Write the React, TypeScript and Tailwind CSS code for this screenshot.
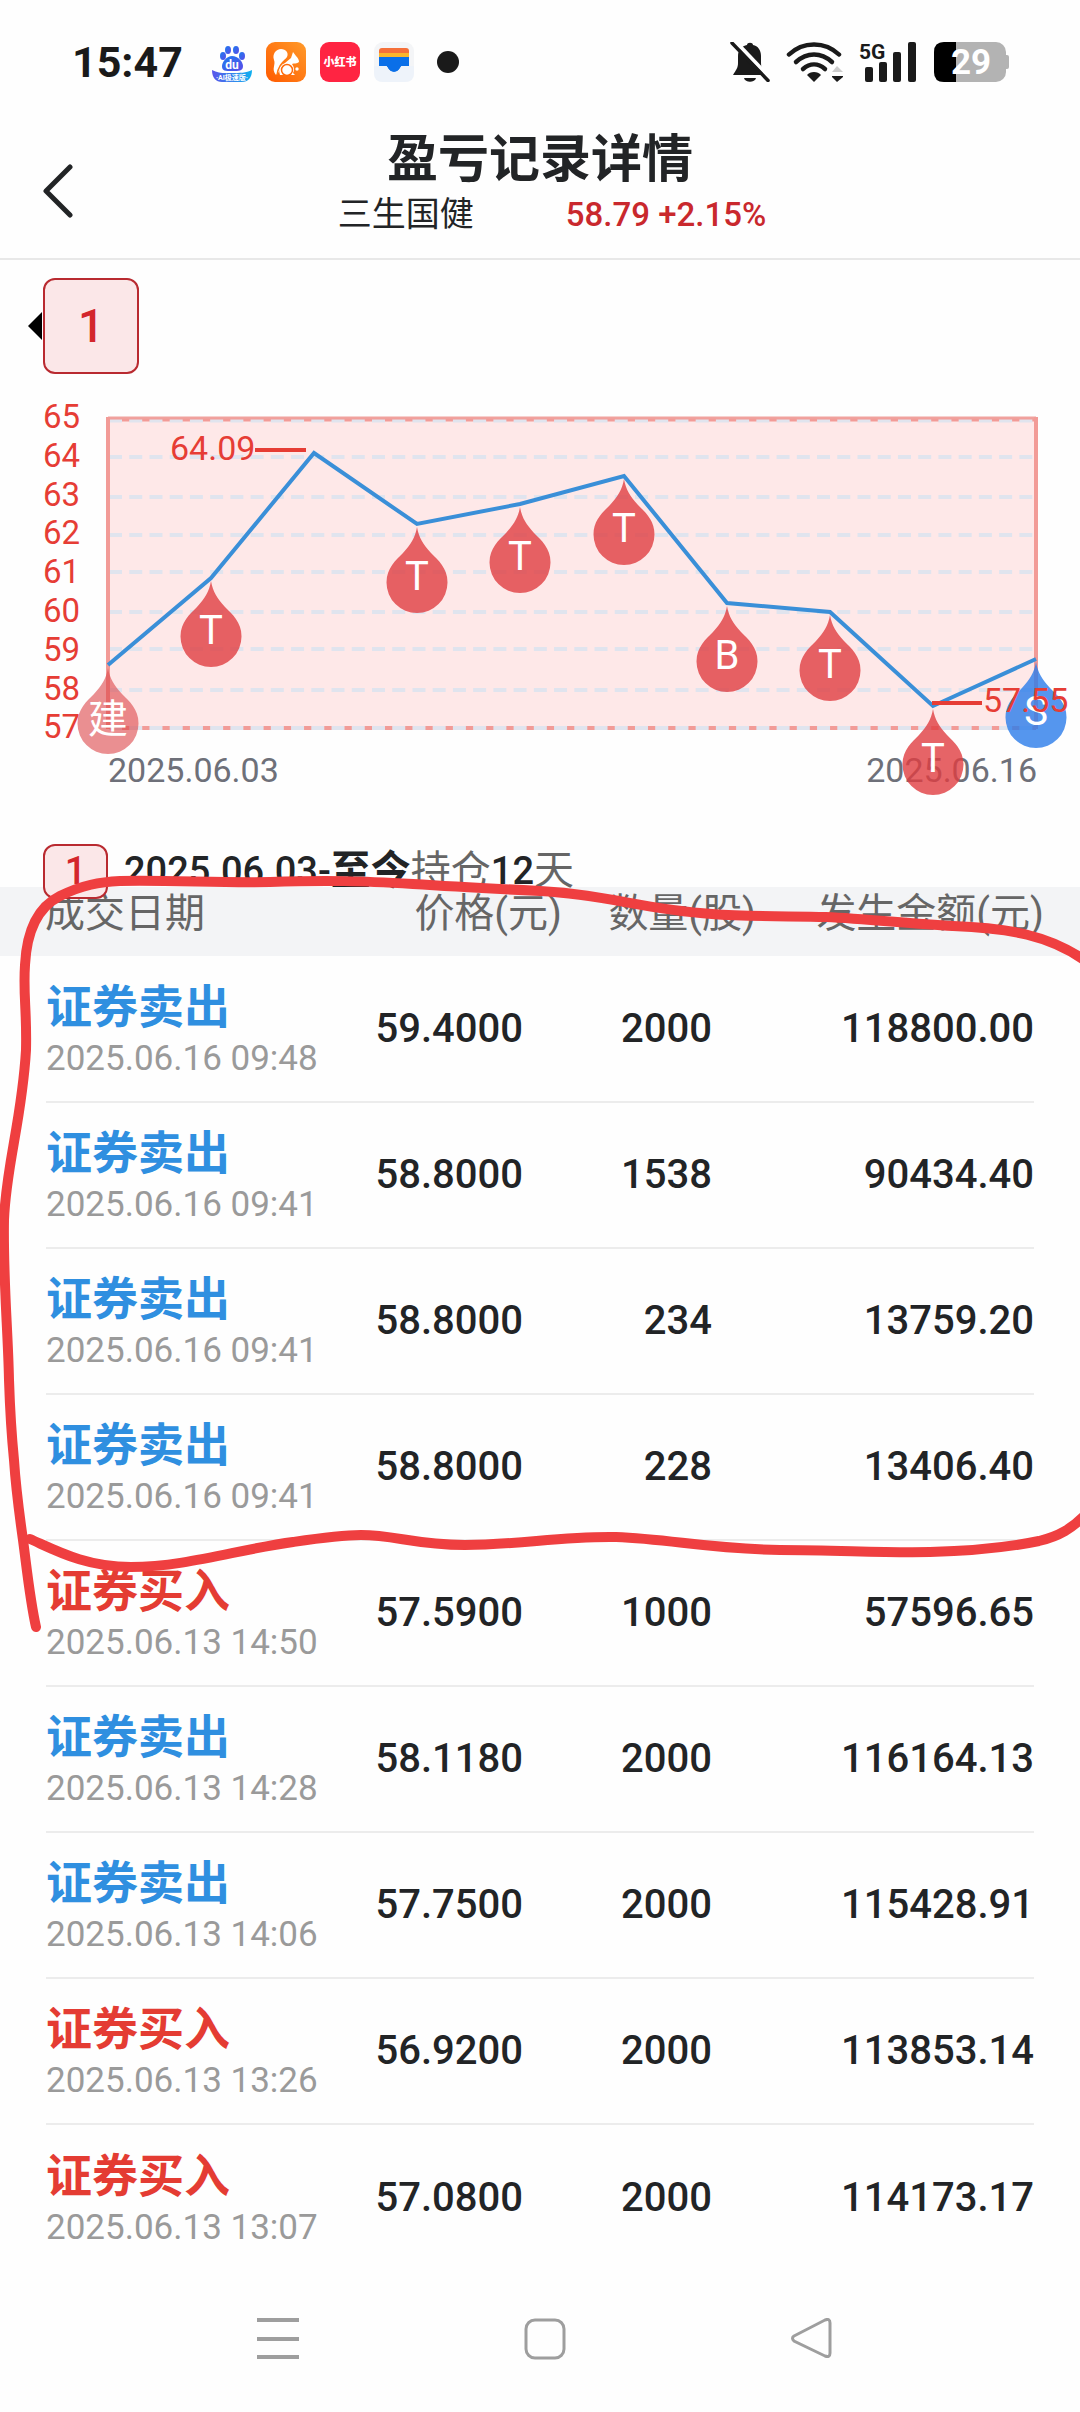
import clsx from "clsx";

interface Trade {
    side: "buy" | "sell";
    time: string;
    price: string;
    amount: string;
    total: string;
}

interface ChartPoint {
    x: number;
    y: number;
    marker?: string;
    kind?: "open" | "trade" | "close";
}

const trades: Trade[] = [
    {side: "sell", time: "2025.06.16 09:48", price: "59.4000", amount: "2000", total: "118800.00"},
    {side: "sell", time: "2025.06.16 09:41", price: "58.8000", amount: "1538", total: "90434.40"},
    {side: "sell", time: "2025.06.16 09:41", price: "58.8000", amount: "234", total: "13759.20"},
    {side: "sell", time: "2025.06.16 09:41", price: "58.8000", amount: "228", total: "13406.40"},
    {side: "buy", time: "2025.06.13 14:50", price: "57.5900", amount: "1000", total: "57596.65"},
    {side: "sell", time: "2025.06.13 14:28", price: "58.1180", amount: "2000", total: "116164.13"},
    {side: "sell", time: "2025.06.13 14:06", price: "57.7500", amount: "2000", total: "115428.91"},
    {side: "buy", time: "2025.06.13 13:26", price: "56.9200", amount: "2000", total: "113853.14"},
    {side: "buy", time: "2025.06.13 13:07", price: "57.0800", amount: "2000", total: "114173.17"},
];

const points: ChartPoint[] = [
    {x: 108, y: 291, marker: "建", kind: "open"},
    {x: 211, y: 204, marker: "T", kind: "trade"},
    {x: 314, y: 79},
    {x: 417, y: 150, marker: "T", kind: "trade"},
    {x: 520, y: 130, marker: "T", kind: "trade"},
    {x: 624, y: 102, marker: "T", kind: "trade"},
    {x: 727, y: 229, marker: "B", kind: "trade"},
    {x: 830, y: 238, marker: "T", kind: "trade"},
    {x: 933, y: 332, marker: "T", kind: "trade"},
    {x: 1036, y: 285, marker: "S", kind: "close"},
];

const gridLines = [83, 123, 161, 198, 238, 275, 316];

const StatusBar = () => (
    <div className="flex items-center justify-between pt-[42px] pb-[42px] pl-[72px] pr-[71px]">
        <div className="flex items-center h-10">
            <span className="w-[140px] text-[43px] leading-10 font-bold text-[#1a1a1a]">15:47</span>
            <div className="flex items-center gap-[14px]">
                {/* baidu */}
                <svg width="40" height="40" viewBox="0 0 40 40">
                    <defs>
                        <linearGradient id="paw" x1="0" y1="0" x2="1" y2="1">
                            <stop offset="0" stopColor="#1b7cf0"/>
                            <stop offset="1" stopColor="#5b4be8"/>
                        </linearGradient>
                        <linearGradient id="wave" x1="0" y1="0" x2="1" y2="0">
                            <stop offset="0" stopColor="#5a55ea"/>
                            <stop offset="1" stopColor="#0fb0ef"/>
                        </linearGradient>
                    </defs>
                    <g fill="url(#paw)">
                        <ellipse cx="11" cy="14" rx="3" ry="4"/>
                        <ellipse cx="16" cy="8" rx="3" ry="4"/>
                        <ellipse cx="24" cy="8" rx="3" ry="4"/>
                        <ellipse cx="30" cy="14" rx="3" ry="4"/>
                        <path d="M20 14C26 14 31 20 31 24C31 29 27 29 20 29C13 29 10 29 10 24C10 20 15 14 20 14Z"/>
                    </g>
                    <path d="M0 28C7 32 14 31 20 31C28 31 34 31 40 28C40 36 36 40 30 40H10C4 40 0 36 0 28Z"
                          fill="url(#wave)"/>
                    <text x="20" y="27" textAnchor="middle" fontSize="12" fontWeight="700" fill="#fff">du</text>
                    <text x="20" y="38" textAnchor="middle" fontSize="7" fontWeight="700" fill="#fff">·AI极速版·</text>
                </svg>
                {/* uc browser */}
                <svg width="40" height="40" viewBox="0 0 40 40">
                    <defs>
                        <linearGradient id="uc" x1="1" y1="0" x2="0" y2="1">
                            <stop offset="0" stopColor="#ff9a2a"/>
                            <stop offset="1" stopColor="#ff5a00"/>
                        </linearGradient>
                    </defs>
                    <rect width="40" height="40" rx="9" fill="url(#uc)"/>
                    {/* tail */}
                    <path fill="#fff"
                          d="M10 33C5 27 10 23 8 18C6 12 10 7 15 7C20 7 23 11 21 15C19 18 15 19 17 23C14 26 14 30 10 33Z"/>
                    {/* head and body */}
                    <path fill="#fff"
                          d="M14 33C12 27 15 23 19 21L25 16L27 10L30 14C32 16 33 18 33 20C31 22 28 21 26 22C28 25 29 28 27 31L29 33Z"/>
                    <path d="M11 33C12 26 15 21 20 18" fill="none" stroke="#ff7a14" strokeWidth="1.500"/>
                    <circle cx="21" cy="28" r="5.500" fill="#fff" stroke="#ff6a0a" strokeWidth="1.500"/>
                    <circle cx="31" cy="27" r="1.700" fill="#fff"/>
                </svg>
                {/* xiaohongshu */}
                <svg width="40" height="40" viewBox="0 0 40 40">
                    <rect width="40" height="40" rx="9" fill="#ff2442"/>
                    <text x="20" y="24" textAnchor="middle" fontSize="11" fontWeight="900" fill="#fff">小红书</text>
                </svg>
                {/* wallet */}
                <svg width="40" height="40" viewBox="0 0 40 40">
                    <rect width="40" height="40" rx="9" fill="#f4f5f7"/>
                    <path d="M5 9Q5 6 8 6H32Q35 6 35 9V20H5Z" fill="#f5703a"/>
                    <path d="M5 11H35V20H5Z" fill="#fbb62c"/>
                    <path d="M5 15H35V24H28C26 24 26 30 20 30C14 30 14 24 12 24H5Z" fill="#0a6fe8"/>
                    <path d="M0 24H12C14 24 14 30 20 30C26 30 26 24 28 24H40V31Q40 40 31 40H9Q0 40 0 31Z"
                          fill="#eef3fa"/>
                </svg>
            </div>
            <div className="ml-[23px] size-[22px] rounded-full bg-[#1a1a1a]"/>
        </div>
        <div className="flex items-center">
            {/* muted bell */}
            <svg width="40" height="40" viewBox="0 0 40 40" fill="#1a1a1a">
                <path d="M17 3C17 0 23 0 23 3C28 4 31 8 31 14V21C31 27 33 29 36 33H3C6 28 8 26 8 21V14C8 8 12 4 17 3Z"/>
                <path d="M14 36H26C25 41 15 41 14 36Z"/>
                <path d="M4 -2L42 38" stroke="#fff" strokeWidth="4"/>
                <path d="M2 1L38 38.500" stroke="#1a1a1a" strokeWidth="3.500" strokeLinecap="round"/>
            </svg>
            {/* wifi */}
            <svg className="ml-4" width="58" height="40" viewBox="0 0 58 40">
                <g fill="none" stroke="#1a1a1a" strokeWidth="4.500" strokeLinecap="round">
                    <path d="M3 12.500C17 -1 39 -1 53 12.500"/>
                    <path d="M10 20C21 10 35 10 46 20"/>
                    <path d="M17 27C24 21 32 21 39 27"/>
                </g>
                <path d="M21 33C24 29 32 29 35 33L28 40Z" fill="#1a1a1a"/>
                <path d="M46 30L51 24L57 30Z" fill="#ccc"/>
                <path d="M46 34H57V35L51 40L46 35Z" fill="#1a1a1a"/>
            </svg>
            {/* 5G signal */}
            <svg className="ml-[15px]" width="58" height="40" viewBox="0 0 58 40" fill="#1a1a1a">
                <text x="0" y="17" fontSize="21" fontWeight="700">5G</text>
                <rect x="6" y="25" width="8" height="15" rx="2"/>
                <rect x="20" y="20" width="8" height="20" rx="2"/>
                <rect x="34" y="10" width="8" height="30" rx="2"/>
                <rect x="49" y="0" width="8" height="40" rx="2"/>
            </svg>
            {/* battery */}
            <svg className="ml-[17px]" width="75" height="40" viewBox="0 0 75 40">
                <rect width="72" height="40" rx="10" fill="#b3b3b3"/>
                <rect x="70" y="13" width="5" height="14" rx="2" fill="#b3b3b3"/>
                <path d="M10 0H22V40H10Q0 40 0 30V10Q0 0 10 0Z" fill="#000"/>
                <text x="37" y="32" textAnchor="middle" fontSize="35" fontWeight="700" fill="#fff">29</text>
            </svg>
        </div>
    </div>
);

const Header = () => (
    <header className="grid grid-cols-[96px_1fr_96px] items-center border-b-2 border-[#e8e8e8]">
        <button aria-label="返回" className="pl-[43px]">
            <svg width="30" height="54" viewBox="0 0 30 54" fill="none" stroke="#222426" strokeWidth="5"
                 strokeLinecap="round" strokeLinejoin="round">
                <path d="M27 3L3 27L27 51"/>
            </svg>
        </button>
        <div className="pt-2 pb-[18px] text-center">
            <h1 className="text-[51px] leading-[56px] font-bold text-[#222426]">盈亏记录详情</h1>
            <div className="flex justify-center gap-[92px] pl-6 leading-[52px]">
                <span className="text-[34px] text-[#222426]">三生国健</span>
                <span className="pt-0.5 text-[33px] leading-[50px] font-medium text-[#c9282d]">58.79 +2.15%</span>
            </div>
        </div>
    </header>
);

const dropStyle = {
    open: {fill: "#dc4447", opacity: 0.6},
    trade: {fill: "#e03d41", opacity: 0.8},
    close: {fill: "#2a7cea", opacity: 0.8},
};

const Marker = ({point}: { point: ChartPoint }) => (
    <g transform={`translate(${point.x} ${point.y})`}>
        <path d="M0 3C2 14 6 20 14 29C21 36 30.500 44 30.500 58.500A30.500 30.500 0 0 1 -30.500 58.500C-30.500 44 -21 36 -14 29C-6 20 -2 14 0 3Z"
              {...dropStyle[point.kind ?? "trade"]}/>
        <text y={point.kind === "open" ? 68 : 66} textAnchor="middle" fontSize="40" fill="#fff">{point.marker}</text>
    </g>
);

const PriceChart = () => (
    <svg className="block w-full h-auto" viewBox="0 0 1080 436">
        {/* plot area */}
        <rect x="108" y="44" width="928" height="310" fill="#fee8e8"/>
        {gridLines.map((y) => (
            <path key={y} d={`M109 ${y}H1034`} stroke="#e0e4ee" strokeWidth="4" strokeDasharray="13 7.230"/>
        ))}
        <path d="M108 44H1036" stroke="#f0a29e" strokeWidth="3"/>
        <path d="M109 46H1036" stroke="#f29b97" strokeWidth="3"/>
        <path d="M109 47H1036" stroke="#e0e4ee" strokeWidth="3" strokeDasharray="13 7.230"/>
        <path d="M109 354H1036" stroke="#f29b97" strokeWidth="4"/>
        <path d="M109 354H1036" stroke="#e0e4ee" strokeWidth="4" strokeDasharray="13 7.230"/>
        <path d="M108 43V355M1036 43V355" stroke="#f29b97" strokeWidth="4"/>

        {/* y axis */}
        <g fontSize="33" fill="#e63d35">
            {[65, 64, 63, 62, 61, 60, 59, 58, 57].map((label, index) => (
                <text key={label} x="43" y={54 + Math.round(index * 38.800)}>{label}</text>
            ))}
        </g>
        {/* x axis */}
        <g fontSize="34" fill="#6e7079">
            <text x="108" y="408">2025.06.03</text>
            <text x="1037" y="408" textAnchor="end">2025.06.16</text>
        </g>

        <polyline points={points.map((p) => `${p.x},${p.y}`).join(" ")} fill="none" stroke="#3a8fd8"
                  strokeWidth="4"/>
        {points.filter((p) => p.marker).map((p) => <Marker key={p.x} point={p}/>)}

        {/* highest and lowest price */}
        <path d="M255 76H306M932 329H982" stroke="#e63d35" strokeWidth="4"/>
        <g fontSize="34" fill="#e63d35">
            <text x="170" y="86">64.09</text>
            <text x="983" y="338">57.55</text>
        </g>
    </svg>
);

const TradeTable = () => (
    <table className="w-full table-fixed whitespace-nowrap">
        <colgroup>
            <col className="w-[46px]"/>
            <col/>
            <col className="w-[218px]"/>
            <col className="w-[194px]"/>
            <col className="w-[278px]"/>
            <col className="w-[46px]"/>
        </colgroup>
        <thead>
        <tr className="h-[69px] bg-[#f3f4f6] text-[40px] leading-[52px] text-[#666]">
            <th colSpan={2} className="pl-[45px] pb-4 text-left font-normal">成交日期</th>
            <th className="pb-4 text-right font-normal">价格(元)</th>
            <th className="pb-4 text-right font-normal">数量(股)</th>
            <th colSpan={2} className="pr-9 pb-4 text-right font-normal">发生金额(元)</th>
        </tr>
        </thead>
        <tbody className="text-[40px] font-medium text-[#222426]">
        {trades.map((trade, index) => {
            const cell = clsx("border-[#ececec]", index < trades.length - 1 && "border-b-2");
            return (
                <tr key={index} className="h-[146px]">
                    <td/>
                    <td className={clsx(cell, "pt-1")}>
                        <div className={clsx("text-[46px] leading-[56px] font-bold",
                            trade.side === "sell" ? "text-[#2f8fe0]" : "text-[#e43c33]")}>
                            {trade.side === "sell" ? "证券卖出" : "证券买入"}
                        </div>
                        <div className="text-[35px] leading-[48px] font-normal text-[#9a9a9a]">{trade.time}</div>
                    </td>
                    <td className={clsx(cell, "pr-[39px] text-right")}>{trade.price}</td>
                    <td className={clsx(cell, "pr-11 text-right")}>{trade.amount}</td>
                    <td className={clsx(cell, "text-right")}>{trade.total}</td>
                    <td/>
                </tr>
            );
        })}
        </tbody>
    </table>
);

// freehand marker strokes drawn over the page
const Annotation = () => (
    <svg className="absolute inset-x-0 top-0 z-20 w-full h-auto pointer-events-none" viewBox="0 0 1080 2412"
         fill="none" stroke="#ef3f40" strokeWidth="10" strokeLinecap="round" strokeLinejoin="round">
        <path d="M36 1627C30 1600 27 1570 23 1540C18 1505 16 1490 14 1460C11 1430 10 1410 9 1380C8 1330 3 1280 4 1220C6 1165 22 1120 26 1050C27 1010 23 995 25 965C27 925 42 905 60 896C82 885 100 882 120 881C170 880 220 883 270 882C330 880 360 881 413 884C460 887 500 889 540 891C610 895 640 909 712 914C750 917 790 916 826 917C870 919 910 924 953 926C1010 928 1050 936 1084 960"/>
        <path d="M30 1539C55 1550 85 1567 131 1567C185 1567 240 1549 293 1542C320 1538 340 1535 361 1535C395 1535 415 1545 465 1545C520 1545 560 1536 616 1537C670 1539 710 1549 780 1550C840 1550 880 1553 930 1552C970 1551 1010 1547 1039 1541C1060 1536 1072 1528 1084 1516"/>
    </svg>
);

const NavigationBar = () => (
    <nav className="grid grid-cols-3 justify-items-center pt-12 pb-14 pl-[144px] pr-[135px]">
        <button aria-label="最近任务">
            <svg width="42" height="42" viewBox="0 0 42 42" stroke="#9e9e9e" strokeWidth="4">
                <path d="M0 2H42M0 21H42M0 39H42"/>
            </svg>
        </button>
        <button aria-label="主屏幕">
            <svg width="42" height="42" viewBox="0 0 42 42" fill="none" stroke="#9e9e9e" strokeWidth="3">
                <rect x="2" y="2" width="38" height="38" rx="9"/>
            </svg>
        </button>
        <button aria-label="返回上一页">
            <svg width="42" height="42" viewBox="0 0 42 42" fill="none" stroke="#9e9e9e" strokeWidth="3">
                <path d="M3 18L34 2Q39 0 39 5V35Q39 40 34 38L3 23Q0 20 3 18Z"/>
            </svg>
        </button>
    </nav>
);

const App = () => {
    return (
        <main className="relative w-full overflow-x-hidden bg-[#fefefe] font-['Roboto','Noto_Sans_CJK_SC',sans-serif]">
            <StatusBar/>
            <Header/>

            {/* position tabs */}
            <div className="flex items-center gap-px pt-[18px] pl-7">
                <svg width="14" height="28" viewBox="0 0 14 28">
                    <path d="M14 0V28L0 14Z" fill="#000"/>
                </svg>
                <button
                    className="size-24 rounded-xl border-2 border-[#b92a30] bg-[#fbe7e8] text-[46px] font-medium text-[#d3262c]">
                    1
                </button>
            </div>

            <PriceChart/>

            {/* holding period, overlaps the table head below */}
            <div className="relative z-10 -mb-3 flex items-center pt-[33px] pl-[43px]">
                <span
                    className="flex h-[55px] w-[65px] items-center justify-center rounded-xl border-2 border-[#b92a30] bg-[#fbe7e8] text-[38px] font-medium text-[#d3262c]">
                    1
                </span>
                <p className="ml-4 text-[40px] leading-[55px] text-[#666]">
                    <span className="text-[38px] font-medium text-[#222426]">2025.06.03-</span>
                    <span className="font-bold text-[#222426]">至今</span>
                    持仓
                    <span className="text-[38px] font-medium text-[#222426]">12</span>
                    天
                </p>
            </div>

            <TradeTable/>
            <NavigationBar/>
            <Annotation/>
        </main>
    );
};

export default App;
